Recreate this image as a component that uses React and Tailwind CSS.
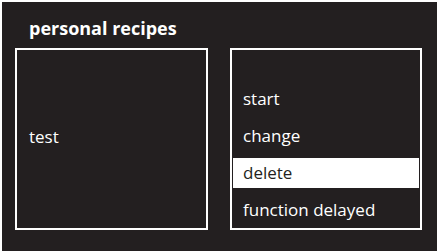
import React from 'react';

const items = ['start', 'change', 'delete', 'function delayed'];

const App = () => {
  const selected = 'delete';

  return (
    <div
      className="w-[437px] h-[251px] bg-[#231f20] border-t-[2px] border-l-[2px] border-white text-white overflow-hidden"
      style={{ fontFamily: '"Open Sans", "Liberation Sans", sans-serif' }}
    >
      <div className="pl-[27px] pt-[14px] h-[46px]">
        <h1 className="text-[18px] font-bold leading-[24px]">personal recipes</h1>
      </div>
      <div className="flex gap-[22px] pl-[13px]">
        <div className="w-[193px] h-[182px] border-2 border-white flex items-center pl-[12px] pb-[4px]">
          <span className="text-[17px]">test</span>
        </div>
        <div className="w-[192px] h-[182px] border-2 border-white flex flex-col justify-end gap-[7px] pb-[3px] px-[1px]">
          {items.map((item) => (
            <div
              key={item}
              className={`h-[30px] leading-[29px] text-[17px] pl-[10px] ${item === selected ? 'bg-white text-[#231f20]' : ''}`}
            >
              {item}
            </div>
          ))}
        </div>
      </div>
    </div>
  );
};

export default App;
